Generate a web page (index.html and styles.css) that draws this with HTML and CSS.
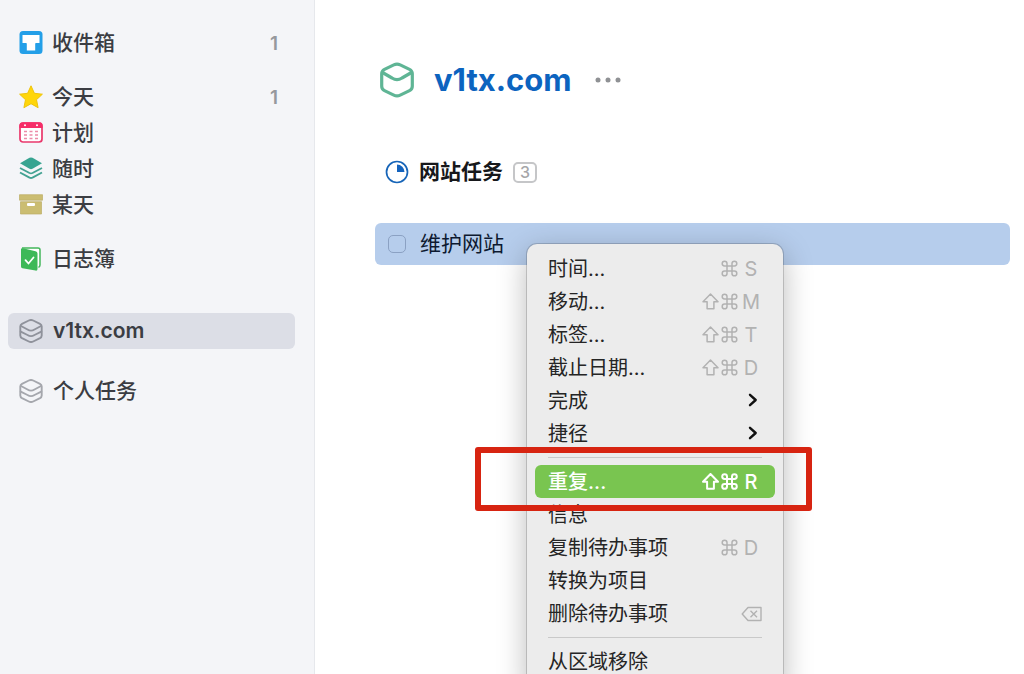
FILE: index.html
```html
<!DOCTYPE html>
<html lang="zh-CN">
<head>
<meta charset="utf-8">
<title>v1tx.com</title>
<link rel="stylesheet" href="styles.css">
</head>
<body>
<svg class="defs" aria-hidden="true">
  <symbol id="cmd" viewBox="0 0 17 17"><path d="M6 6V3.6A2.4 2.4 0 1 0 3.6 6H13.4A2.4 2.4 0 1 0 11 3.6V13.4A2.4 2.4 0 1 0 13.4 11H3.6A2.4 2.4 0 1 0 6 13.4Z" fill="none" stroke="currentColor"/></symbol>
  <symbol id="shift" viewBox="0 0 17 17"><path d="M8.500 1 16 8.700H11.900V15.700H5.100V8.700H1Z" fill="none" stroke="currentColor" stroke-linejoin="round"/></symbol>
  <symbol id="chevron" viewBox="0 0 10 14"><path d="M2 1.800 7.700 7 2 12.200" fill="none" stroke="currentColor" stroke-width="2.400" stroke-linecap="round" stroke-linejoin="round"/></symbol>
  <symbol id="area" viewBox="0 0 24 24"><g fill="none" stroke="currentColor" stroke-width="1.900" stroke-linejoin="round" stroke-linecap="round"><path d="M9.800 1.500Q12 .4 14.200 1.500L21 4.900Q22.700 5.800 22.700 7.600V16.400Q22.700 18.200 21 19.100L14.200 22.500Q12 23.600 9.800 22.500L3 19.100Q1.300 18.200 1.300 16.400V7.600Q1.300 5.800 3 4.900Z"/><path d="M2 7 8.500 10.500Q12 12.700 15.500 10.500L22 7M1.700 12.600 8.500 16Q12 18.200 15.500 16L22.300 12.600"/></g></symbol>
</svg>
<div class="app">
  <nav class="sidebar" aria-label="列表">
    <a class="item" href="#"><svg class="icon" viewBox="0 0 24 24"><rect x="0.500" y="0" width="23" height="23" rx="3.500" fill="#239fe8"/><path d="M3.500 4H20.500V12H17Q16.200 12 16.200 12.800V19.500H7.800V12.800Q7.800 12 7 12H3.500Z" fill="#fff"/></svg><span class="name">收件箱</span><span class="count">1</span></a>
    <div class="group">
      <a class="item" href="#"><svg class="icon" viewBox="0 0 24 24"><path d="M12 .8 15.400 8.300 23.400 9.200 17.500 14.700 19.100 22.700 12 18.700 4.900 22.700 6.500 14.700.6 9.200 8.600 8.300Z" fill="#ffd60a" stroke="#eec40c" stroke-linejoin="round"/></svg><span class="name">今天</span><span class="count">1</span></a>
      <a class="item" href="#"><svg class="icon" viewBox="0 0 24 24"><rect x="1" y="2" width="22" height="19" rx="3" fill="#fff" stroke="#e9386c" stroke-width="1.700"/><path d="M.5 7V4.500Q.5 1.300 4 1.300H20Q23.500 1.300 23.500 4.500V7Z" fill="#f62d68"/><g fill="#fff"><circle cx="6" cy="4.200" r="1"/><circle cx="18" cy="4.200" r="1"/></g><path d="M5 10.500H8M10.500 10.500H13.500M16 10.500H19M5 14H8M10.500 14H13.500M16 14H19M5 17.500H8M10.500 17.500H13.500M16 17.500H19" stroke="#ec8ba8" stroke-width="1.700"/></svg><span class="name">计划</span></a>
      <a class="item" href="#"><svg class="icon" viewBox="0 0 24 24"><path d="M10.500 .8Q12 .1 13.500 .8L23 6.300 13.500 11.800Q12 12.500 10.500 11.800L1 6.300Z" fill="#37a491"/><path d="M1 11 10.500 16Q12 16.700 13.500 16L23 11M1 15.500 10.500 20.700Q12 21.400 13.500 20.700L23 15.500" fill="none" stroke="#42a292" stroke-width="1.900"/></svg><span class="name">随时</span></a>
      <a class="item" href="#"><svg class="icon" viewBox="0 0 24 24"><path d="M.5 1.700H23.500V7.200H.5ZM1.500 8.700H22.500V21H1.500Z" fill="#cbbd72" stroke="#bbae66" stroke-width=".7"/><rect x="8" y="10" width="8" height="3" rx="1" fill="#fff"/></svg><span class="name">某天</span></a>
    </div>
    <a class="item" href="#"><svg class="icon" viewBox="0 0 24 24"><path d="M3 1H19Q21 1 21 3V18Q21 19.500 19.500 20.500" fill="#fff" stroke="#43b65b" stroke-width="1.500"/><path d="M2 2.200Q2 .8 4 1.300L16.500 4.200Q18.500 4.800 18.500 6.500V22Q18.500 24 16.500 23.600L3.500 21.300Q2 21 2 19.500Z" fill="#3db958"/><path d="M6.500 13.200 9.500 16.500 14.500 10.500" fill="none" stroke="#fff" stroke-width="1.800" stroke-linecap="round"/></svg><span class="name">日志簿</span></a>
    <div class="areas">
      <a class="item selected" href="#" aria-current="page"><svg class="icon area"><use href="#area"/></svg><span class="name">v1tx.com</span></a>
      <a class="item" href="#"><svg class="icon area light"><use href="#area"/></svg><span class="name">个人任务</span></a>
    </div>
  </nav>
  <main class="main">
    <header class="header">
      <svg class="cube" viewBox="0 0 34 36"><g fill="none" stroke="#5fb595" stroke-width="3.200" stroke-linejoin="round"><path d="M13.800 2.900Q17 1.300 20.200 2.900L29.500 7.400Q32.300 8.800 32.300 11.800V24.200Q32.300 27.200 29.500 28.600L20.200 33.100Q17 34.700 13.800 33.100L4.500 28.600Q1.700 27.200 1.700 24.200V11.800Q1.700 8.800 4.500 7.400Z"/><path d="M2.500 10.500 12 16Q17 19.200 22 16L31.500 10.500"/></g></svg>
      <h1 class="title">v1tx.com</h1>
      <button class="more" aria-label="更多"><svg viewBox="0 0 26 6" width="26" height="6" fill="#8f9194"><circle cx="3" cy="3" r="2.500"/><circle cx="13" cy="3" r="2.500"/><circle cx="23" cy="3" r="2.500"/></svg></button>
    </header>
    <h2 class="project"><svg class="progress" viewBox="0 0 24 24"><circle cx="12" cy="12" r="10.500" fill="none" stroke="#1765b8" stroke-width="1.700"/><path d="M12 4.500A7.500 7.500 0 0 1 19.500 12H12Z" fill="#1463bd"/></svg><span>网站任务</span><span class="badge">3</span></h2>
    <div class="task">
      <input class="check" type="checkbox" id="task"><label for="task">维护网站</label>
      <div class="menu" role="menu">
        <button class="entry" role="menuitem">时间...<span class="keys"><svg><use href="#cmd"/></svg><kbd>S</kbd></span></button>
        <button class="entry" role="menuitem">移动...<span class="keys"><svg><use href="#shift"/></svg><svg><use href="#cmd"/></svg><kbd>M</kbd></span></button>
        <button class="entry" role="menuitem">标签...<span class="keys"><svg><use href="#shift"/></svg><svg><use href="#cmd"/></svg><kbd>T</kbd></span></button>
        <button class="entry" role="menuitem">截止日期...<span class="keys"><svg><use href="#shift"/></svg><svg><use href="#cmd"/></svg><kbd>D</kbd></span></button>
        <button class="entry" role="menuitem">完成<svg class="chevron"><use href="#chevron"/></svg></button>
        <button class="entry" role="menuitem">捷径<svg class="chevron"><use href="#chevron"/></svg></button>
        <hr class="rule">
        <div class="marked">
          <button class="entry active" role="menuitem">重复...<span class="keys"><svg><use href="#shift"/></svg><svg><use href="#cmd"/></svg><kbd>R</kbd></span></button>
        </div>
        <button class="entry" role="menuitem">信息</button>
        <button class="entry" role="menuitem">复制待办事项<span class="keys"><svg><use href="#cmd"/></svg><kbd>D</kbd></span></button>
        <button class="entry" role="menuitem">转换为项目</button>
        <button class="entry" role="menuitem">删除待办事项<svg class="erase" viewBox="0 0 21 16"><path d="M7 1.500H20V14.500H7L1.200 8ZM9.500 4.800 16 11.200M16 4.800 9.500 11.200" fill="none" stroke="#b2b2b2" stroke-width="1.400" stroke-linejoin="round"/></svg></button>
        <hr class="rule">
        <button class="entry" role="menuitem">从区域移除</button>
      </div>
    </div>
  </main>
</div>
</body>
</html>
```
FILE: styles.css
```css
* { box-sizing: border-box; }

body {
  margin: 0;
  overflow: hidden;
  background: #fff;
  color: #3b3d43;
  font: 500 21px/36px Inter, "Noto Sans CJK SC", sans-serif;
}

button {
  margin: 0;
  border: 0;
  background: none;
  color: inherit;
  font: inherit;
}

svg { display: block; flex: none; }
.defs { position: absolute; width: 0; height: 0; }

.app { display: flex; min-height: 100vh; }

.sidebar {
  flex: none;
  width: 315px;
  padding: 25px 19px 0 8px;
  border-right: 1px solid #e6e8ec;
  background: #f4f5f8;
}

.item {
  display: flex;
  align-items: center;
  height: 36px;
  padding: 0 17px 0 11px;
  border-radius: 6px;
  color: inherit;
  text-decoration: none;
}

.group { margin: 18px 0; }
.areas { display: grid; gap: 24px; margin-top: 36px; }
.selected { background: #dcdee6; font-weight: 600; }
.icon { width: 24px; height: 24px; margin-right: 9px; }
.area { margin: 0 10px 1px 0; color: #8f929b; }
.light { color: #a5a7ad; }
.name { flex: 1; }
.count { padding-top: 2px; color: #96989d; font-size: 19px; font-weight: 600; }

.main {
  flex: 1;
  min-width: 0;
  padding: 56px 14px 0 60px;
}

.header {
  display: flex;
  align-items: center;
  height: 48px;
  padding-left: 5px;
}

.cube { width: 34px; height: 36px; }

.title {
  margin: 0 23px 0 20px;
  color: #0c64bf;
  font-size: 31px;
  font-weight: 700;
  line-height: 48px;
}

.more { padding: 0; }

.project {
  display: flex;
  align-items: center;
  margin: 50px 0 33px;
  padding-left: 10px;
  color: #17181b;
  font-size: 21px;
  font-weight: 700;
}

.progress { width: 24px; height: 24px; margin-right: 10px; }

.badge {
  width: 24px;
  height: 21px;
  margin-left: 10px;
  border: 2px solid #c5c6c8;
  border-radius: 5px;
  color: #a5a6a8;
  font-size: 16px;
  font-weight: 500;
  line-height: 17px;
  text-align: center;
}

.task {
  position: relative;
  display: flex;
  align-items: center;
  height: 42px;
  padding-left: 13px;
  border-radius: 6px;
  background: #b6cdec;
  color: #0d1930;
  font-weight: 400;
}

.check {
  appearance: none;
  width: 18px;
  height: 18px;
  margin: 0 14px 0 0;
  border: 1px solid #8ba1c3;
  border-radius: 5px;
}

.menu {
  position: absolute;
  top: 21px;
  left: 152px;
  width: 256px;
  padding: 8px 8px 16px;
  border-radius: 10px;
  background: #ececec;
  box-shadow: 0 0 0 1px rgba(0, 0, 0, .16), 0 8px 30px rgba(0, 0, 0, .28);
  color: #252525;
  font-size: 20px;
}

.entry {
  display: flex;
  align-items: center;
  justify-content: space-between;
  width: 100%;
  height: 33px;
  padding: 2px 13px 0;
  border-radius: 6px;
  line-height: 31px;
  text-align: left;
}

.keys {
  display: flex;
  align-items: center;
  gap: 2px;
  color: #b2b2b2;
}

.keys svg { width: 17px; height: 17px; margin-bottom: 2px; stroke-width: 1.5; }
.keys kbd { width: 22px; font: inherit; text-align: center; }

.chevron { width: 10px; height: 14px; margin: 0 4px 3px 0; color: #111; }
.erase { width: 21px; height: 16px; margin-bottom: 2px; }

.rule {
  height: 1px;
  margin: 7px 13px;
  border: 0;
  background: #c9c9c9;
}

.active {
  background: #79c550;
  color: #fff;
  font-weight: 500;
}

.active .keys { color: #fff; }
.active .keys svg { stroke-width: 2; }

.marked { position: relative; }

.marked::after {
  content: "";
  position: absolute;
  inset: -18px -37px -13px -60px;
  border: 6px solid #d72411;
  border-radius: 3px;
  pointer-events: none;
}
```
